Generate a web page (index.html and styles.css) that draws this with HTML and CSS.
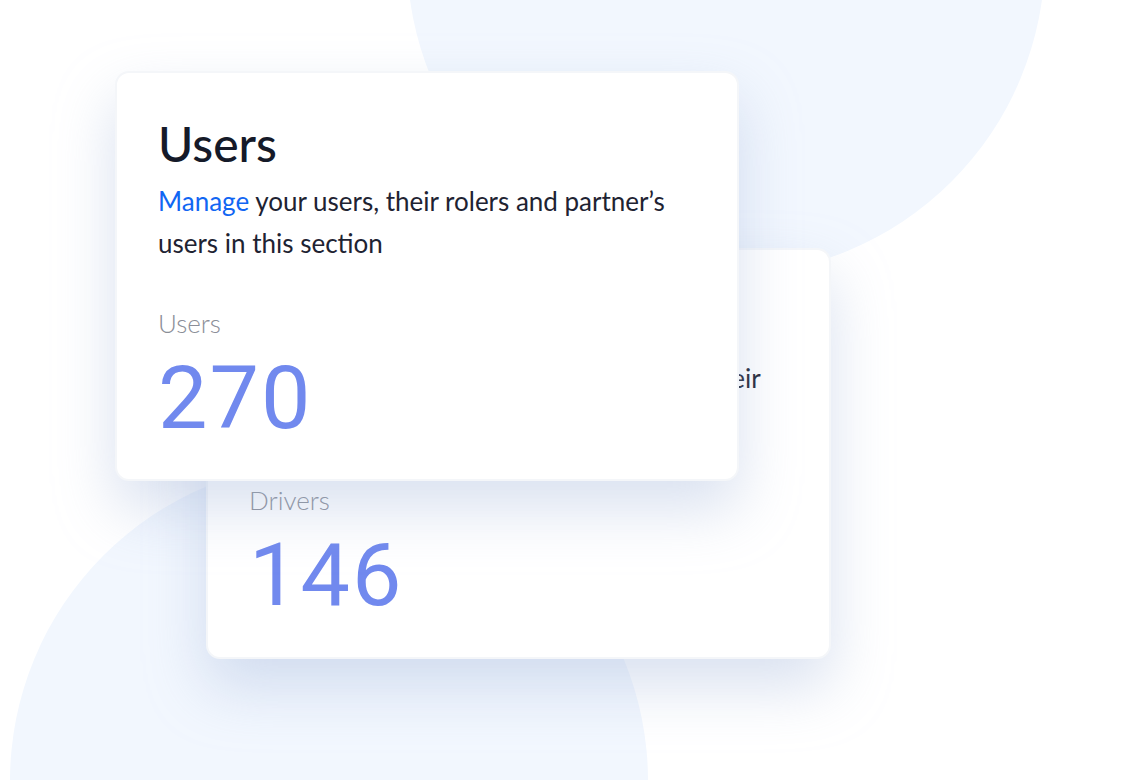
FILE: index.html
```html
<!DOCTYPE html>
<html lang="en">
<head>
  <meta charset="UTF-8" />
  <meta name="viewport" content="width=device-width, initial-scale=1.0"/>
  <title>Users overview</title>
  <link rel="stylesheet" href="styles.css">
</head>
<body>

  <div class="stage">
    <!-- background blobs -->
    <div class="blob blob-top"></div>
    <div class="blob blob-bottom"></div>

    <div class="cards">
      <!-- Drivers card (behind) -->
      <div class="card card-back">
        <h2 class="card-title">Drivers</h2>
        <p class="card-text"><span class="accent">Manage</span> your drivers, check trip and see their vehicles in this section</p>
        <div class="stat-label">Drivers</div>
        <div class="stat-value">146</div>
      </div>

      <!-- Users card (front) -->
      <div class="card card-front">
        <h2 class="card-title">Users</h2>
        <p class="card-text"><span class="accent">Manage</span> your users, their rolers and partner’s users in this section</p>
        <div class="stat-label">Users</div>
        <div class="stat-value">270</div>
      </div>
    </div>
  </div>

</body>
</html>
```

FILE: styles.css
```css
* {
  box-sizing: border-box;
}

body {
  margin: 0;
  background: #ffffff;
  font-family: Lato, "Open Sans", Arial, sans-serif;
  overflow: hidden;
}

.stage {
  position: relative;
  width: 1140px;
  height: 780px;
  overflow: hidden;
}

.blob {
  position: absolute;
  width: 638px;
  height: 638px;
  border-radius: 50%;
  background: #f2f7fe;
}

.blob-top {
  left: 407px;
  top: -363px;
}

.blob-bottom {
  left: 10px;
  top: 462px;
}

.cards {
  position: relative;
  display: grid;
  grid-template-areas: "stack";
  align-items: start;
  justify-items: start;
  padding: 71px 0 0 115px;
}

.card {
  grid-area: stack;
  width: 624px;
  height: 410px;
  padding: 45px 41px 0;
  background: #fff;
  border: 2px solid #f4f6f9;
  border-radius: 14px;
  box-shadow: 0 28px 60px rgba(160, 180, 218, 0.4);
}

.card-back {
  margin: 177px 0 0 91px;
  width: 625px;
  height: 411px;
}

.card-front {
  z-index: 1;
}

.card-title {
  margin: 0;
  font-size: 48px;
  line-height: 52px;
  font-weight: 500;
  color: #151a29;
}

.card-text {
  margin: 10px 0 0;
  font-size: 26px;
  line-height: 42px;
  color: #1e2332;
}

.accent {
  color: #1166f3;
}

.stat-label {
  margin-top: 45px;
  font-size: 26px;
  line-height: 28px;
  font-weight: 300;
  color: #8b8e98;
}

.stat-value {
  margin-top: 17px;
  font-family: Roboto, Lato, sans-serif;
  font-size: 88px;
  line-height: 88px;
  letter-spacing: 2px;
  color: #7189ee;
}
```
